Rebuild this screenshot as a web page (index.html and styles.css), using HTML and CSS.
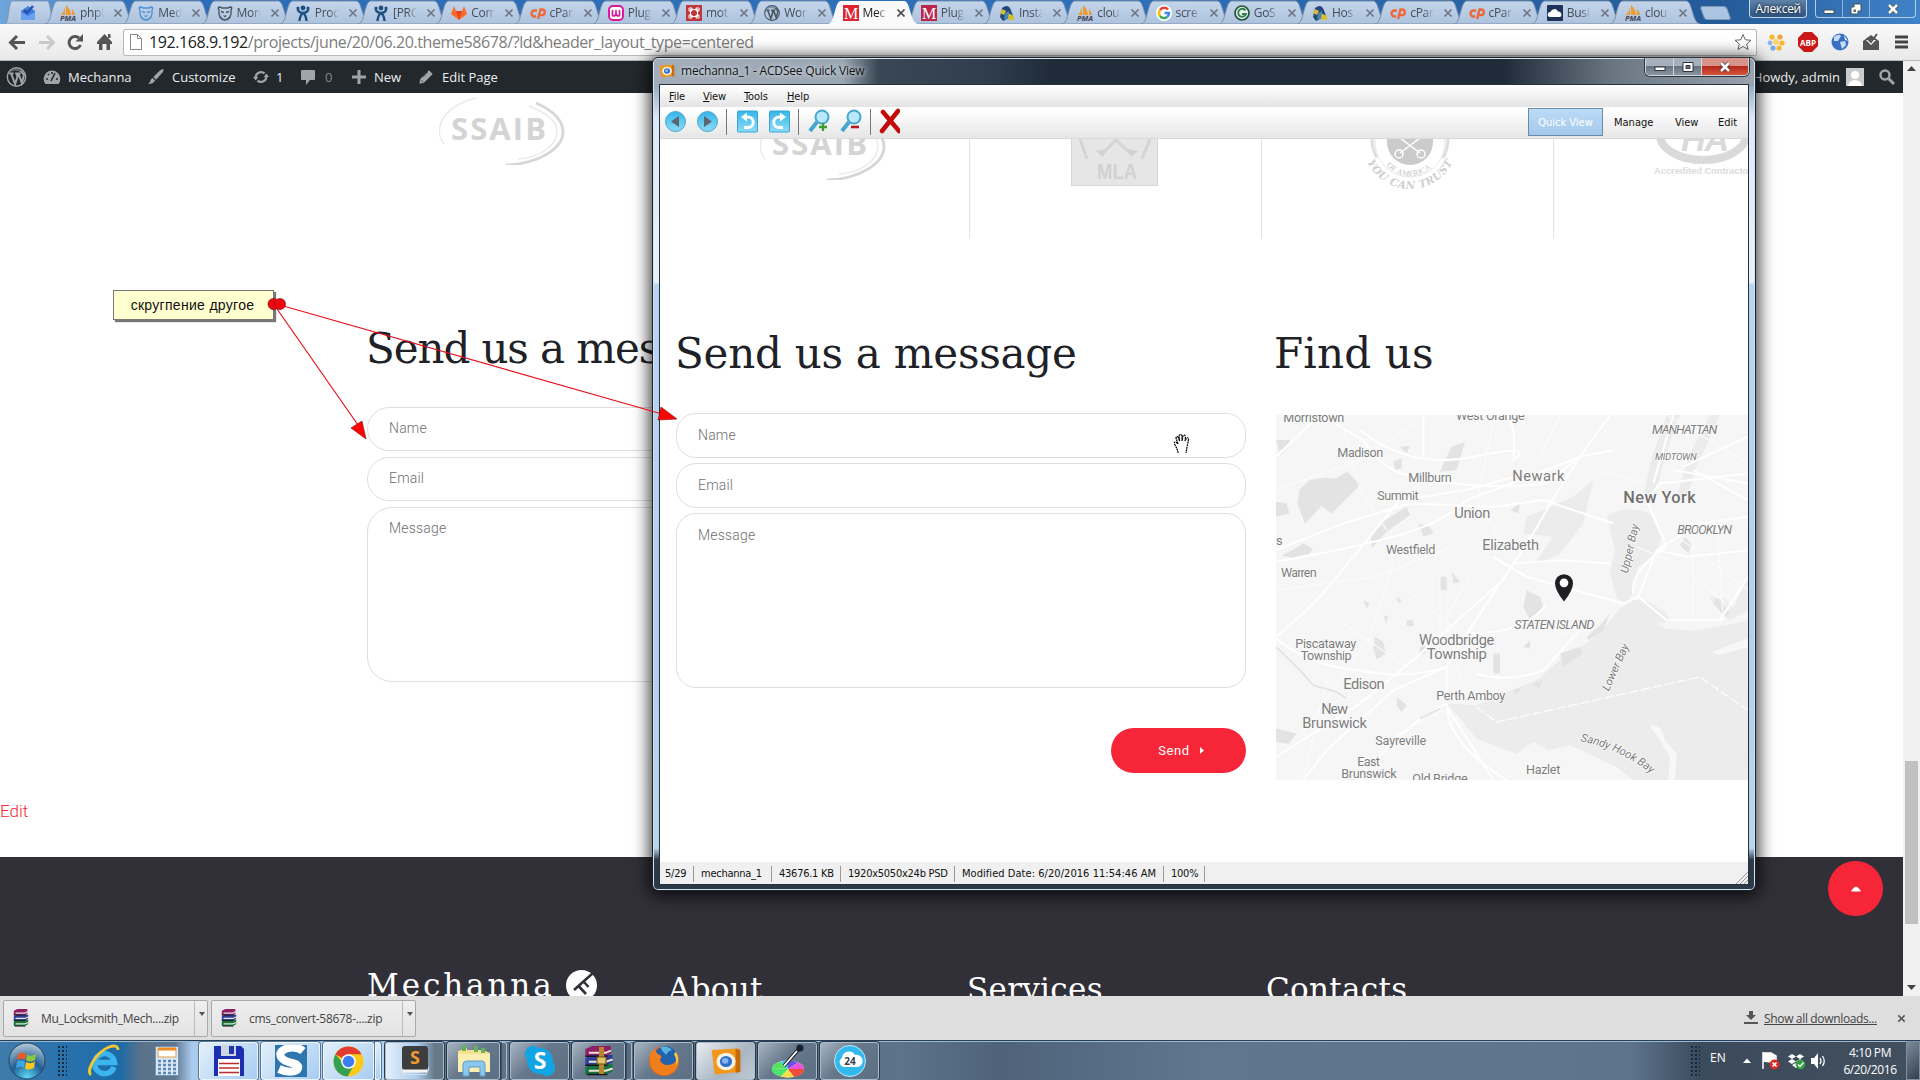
FILE: index.html
```html
<!DOCTYPE html>
<html lang="en">
<head>
<meta charset="utf-8">
<title>Mechanna</title>
<link rel="stylesheet" href="styles.css">
</head>
<body>
<svg class="defs" width="0" height="0">
  <defs>
    <linearGradient id="tabg" x1="0" y1="0" x2="0" y2="1"><stop offset="0" stop-color="#c3d5ea"/><stop offset="1" stop-color="#adc2de"/></linearGradient>
    <linearGradient id="blue" x1="0" y1="0" x2="0" y2="1"><stop offset="0" stop-color="#35b6ea"/><stop offset="1" stop-color="#8bdcf6"/></linearGradient>
    <radialGradient id="orb" cx=".5" cy=".95" r=".9"><stop offset="0" stop-color="#5fd8f5"/><stop offset=".5" stop-color="#1f5f92"/><stop offset="1" stop-color="#a9c2d4"/></radialGradient>
  </defs>
  <symbol id="x" viewBox="0 0 10 10"><path d="M1.5 1.5l7 7M8.5 1.5l-7 7" stroke="currentColor" stroke-width="1.7"/></symbol>
  <symbol id="shape" viewBox="0 0 92 24" preserveAspectRatio="none"><path d="M0 24C5 23 5 17 8 8Q10 1 13 1H78Q81 1 83 8C86 17 87 23 92 24Z" fill="url(#tabg)" stroke="#7b90ab"/></symbol>
  <symbol id="shapeon" viewBox="0 0 92 24" preserveAspectRatio="none"><path d="M0 24C5 23 5 17 8 8Q10 1 13 1H78Q81 1 83 8C86 17 87 23 92 24Z" fill="#f9f9fa"/></symbol>
  <symbol id="pma" viewBox="0 0 16 16"><path d="M1 10Q4 7 5 2V10ZM6 10V0Q11 5 11 10ZM12 10V4Q15 7 15 10Z" fill="#f09b30"/><text x="0" y="16" font-size="7" font-weight="bold" font-style="italic" textLength="16" lengthAdjust="spacingAndGlyphs" fill="#445">PMA</text></symbol>
  <symbol id="bear" viewBox="0 0 16 16"><path d="M2 5Q0 2 3 2L5 3H11L13 2Q16 2 14 5Q15 14 8 15Q1 14 2 5Z" fill="none" stroke="currentColor" stroke-width="1.4"/><path d="M4 6.500L7 7.500M12 6.500L9 7.500" stroke="currentColor" stroke-width="1.500"/><path d="M6 10.500H10L8 12.500Z" fill="currentColor"/></symbol>
  <symbol id="jira" viewBox="0 0 16 16"><circle cx="8" cy="3" r="2.400" fill="#205081"/><circle cx="3" cy="3" r="1.600" fill="#205081"/><circle cx="13" cy="3" r="1.600" fill="#205081"/><path d="M2.500 4Q4 8 8 8T13.500 4M8 8Q11 10 11.500 16M8 8Q5 10 4.500 16" fill="none" stroke="#205081" stroke-width="2.400"/></symbol>
  <symbol id="fox" viewBox="0 0 16 16"><path d="M0 9L3 1L5 6H11L13 1L16 9L8 15Z" fill="#fc6d26"/><path d="M5 6H11L8 15Z" fill="#e24329"/></symbol>
  <symbol id="cp" viewBox="0 0 16 16"><path d="M7 5.500H4.500a3 3 0 000 6H6M8 14L10.500 4.500H12a2.800 2.800 0 010 5.600H10" fill="none" stroke="#f0683a" stroke-width="2.400"/></symbol>
  <symbol id="woo" viewBox="0 0 16 16"><rect x="1" y="1" width="14" height="14" rx="4" fill="#fff" stroke="#d9189b" stroke-width="2"/><path d="M4.500 5V10.500Q6.300 12 8 9V5M8 9Q9.700 12 11.500 10.500V5" fill="none" stroke="#d9189b" stroke-width="1.700"/></symbol>
  <symbol id="mot" viewBox="0 0 16 16"><rect width="16" height="16" fill="#c0363d"/><path d="M4.500 4.500H11.500V11.500H4.500ZM3 3H6V6H3ZM10 3H13V6H10ZM3 10H6V13H3ZM10 10H13V13H10Z" fill="none" stroke="#fff"/></symbol>
  <symbol id="wp" viewBox="0 0 20 20"><circle cx="10" cy="10" r="9.200" fill="none" stroke="currentColor" stroke-width="1.400"/><path d="M2.700 6.500H7M4.600 6.500L8.600 17L11 9.500L9.800 6.500H14M12 6.500L15.300 16L17.500 8Q15 5 14.500 4" fill="none" stroke="currentColor" stroke-width="2"/><path d="M4 4Q10-1 16 4L15 6Q10 2 4 5Z" fill="currentColor" opacity=".5"/></symbol>
  <symbol id="m" viewBox="0 0 16 16"><rect width="16" height="16" fill="currentColor"/><text x="8" y="14" text-anchor="middle" font-family="Liberation Serif" font-size="16" fill="#fff">M</text></symbol>
  <symbol id="host" viewBox="0 0 16 16"><path d="M3 3Q8-1 11 3L13 8L15 14H8L4 16L1 12Z" fill="#25477d"/><path d="M3 4L7 6L5 10L1 8ZM9 8L15 11V15H9Z" fill="#d6bd35"/><path d="M6 8L10 6L9 14H5Z" fill="#4387ad"/></symbol>
  <symbol id="g" viewBox="0 0 16 16"><circle cx="8" cy="8" r="8" fill="#fff"/><path d="M12 4.500A5 5 0 004 5" fill="none" stroke="#ea4335" stroke-width="2.500"/><path d="M4 5A5 5 0 004 11" fill="none" stroke="#fbbc05" stroke-width="2.500"/><path d="M4 11A5 5 0 0011 12" fill="none" stroke="#34a853" stroke-width="2.500"/><path d="M11 12Q13 10.500 13 8H8.500" fill="none" stroke="#4285f4" stroke-width="2.500"/></symbol>
  <symbol id="gos" viewBox="0 0 16 16"><circle cx="8" cy="8" r="7" fill="#e9f0ef" stroke="#26533d" stroke-width="1.700"/><path d="M11.500 5.500A4 4 0 1012 9H8" fill="none" stroke="#29824b" stroke-width="1.800"/></symbol>
  <symbol id="cloud" viewBox="0 0 16 16"><rect width="16" height="16" rx="1" fill="#1f3358"/><path d="M3 12a2.500 2.500 0 01.5-5A4 4 0 0111 6.500 3 3 0 0113 12Z" fill="#fff"/></symbol>
  <symbol id="rar" viewBox="0 0 20 20" preserveAspectRatio="none"><path d="M2 2L6 0H17V5L14 7H2Z" fill="#8f1d68"/><path d="M2 8L6 6H18V11L14 13H2Z" fill="#2d3f9a"/><path d="M2 14L6 12H18V17L14 19H2Z" fill="#167340"/><path d="M4 4.500H14L17 3M4 10.500H14L18 9M4 16.500H14L18 15" fill="none" stroke="#e9e3ce" stroke-width="1.300"/><path d="M2 6.800H15M2 12.800H15M3 19H15" stroke="#1d1020"/></symbol>
  <symbol id="acd" viewBox="0 0 20 20" preserveAspectRatio="none"><path d="M1 2L18 1L19 17L3 19Z" fill="#f39719"/><path d="M16 1L19 2V17L16 18Z" fill="#c86c07"/><circle cx="10" cy="10" r="6" fill="#f4f1e7"/><circle cx="10" cy="10" r="3.800" fill="#2f71c9"/><circle cx="9.500" cy="9.500" r="2" fill="#87b4f0"/></symbol>
</svg>

<div class="screen">
  <header class="tabs">
    <div class="tab pin"><svg class="bg"><use href="#shape"/></svg><svg class="fav" viewBox="0 0 16 16"><path d="M1 6L8 1L15 6V15H1Z" fill="#3f7fe0"/><path d="M4 5L7 8L13 1" fill="none" stroke="#2552a8" stroke-width="2.500"/><path d="M1 7L8 11L15 7V15H1Z" fill="#6aa0f2"/></svg></div>
    <div class="tab"><svg class="bg"><use href="#shape"/></svg><svg class="fav"><use href="#pma"/></svg><span>phpl</span><svg class="x"><use href="#x"/></svg></div>
    <div class="tab"><svg class="bg"><use href="#shape"/></svg><svg class="fav sky"><use href="#bear"/></svg><span>Med</span><svg class="x"><use href="#x"/></svg></div>
    <div class="tab"><svg class="bg"><use href="#shape"/></svg><svg class="fav slate"><use href="#bear"/></svg><span>Mon</span><svg class="x"><use href="#x"/></svg></div>
    <div class="tab"><svg class="bg"><use href="#shape"/></svg><svg class="fav"><use href="#jira"/></svg><span>Prod</span><svg class="x"><use href="#x"/></svg></div>
    <div class="tab"><svg class="bg"><use href="#shape"/></svg><svg class="fav"><use href="#jira"/></svg><span>[PRC</span><svg class="x"><use href="#x"/></svg></div>
    <div class="tab"><svg class="bg"><use href="#shape"/></svg><svg class="fav"><use href="#fox"/></svg><span>Com</span><svg class="x"><use href="#x"/></svg></div>
    <div class="tab"><svg class="bg"><use href="#shape"/></svg><svg class="fav"><use href="#cp"/></svg><span>cPan</span><svg class="x"><use href="#x"/></svg></div>
    <div class="tab"><svg class="bg"><use href="#shape"/></svg><svg class="fav"><use href="#woo"/></svg><span>Plug</span><svg class="x"><use href="#x"/></svg></div>
    <div class="tab"><svg class="bg"><use href="#shape"/></svg><svg class="fav"><use href="#mot"/></svg><span>mot</span><svg class="x"><use href="#x"/></svg></div>
    <div class="tab"><svg class="bg"><use href="#shape"/></svg><svg class="fav slate"><use href="#wp"/></svg><span>Wor</span><svg class="x"><use href="#x"/></svg></div>
    <div class="tab on"><svg class="bg"><use href="#shapeon"/></svg><svg class="fav red"><use href="#m"/></svg><span>Mec</span><svg class="x"><use href="#x"/></svg></div>
    <div class="tab"><svg class="bg"><use href="#shape"/></svg><svg class="fav wine"><use href="#m"/></svg><span>Plug</span><svg class="x"><use href="#x"/></svg></div>
    <div class="tab"><svg class="bg"><use href="#shape"/></svg><svg class="fav"><use href="#host"/></svg><span>Insta</span><svg class="x"><use href="#x"/></svg></div>
    <div class="tab"><svg class="bg"><use href="#shape"/></svg><svg class="fav"><use href="#pma"/></svg><span>clou</span><svg class="x"><use href="#x"/></svg></div>
    <div class="tab"><svg class="bg"><use href="#shape"/></svg><svg class="fav"><use href="#g"/></svg><span>scre</span><svg class="x"><use href="#x"/></svg></div>
    <div class="tab"><svg class="bg"><use href="#shape"/></svg><svg class="fav"><use href="#gos"/></svg><span>GoS</span><svg class="x"><use href="#x"/></svg></div>
    <div class="tab"><svg class="bg"><use href="#shape"/></svg><svg class="fav"><use href="#host"/></svg><span>Hos</span><svg class="x"><use href="#x"/></svg></div>
    <div class="tab"><svg class="bg"><use href="#shape"/></svg><svg class="fav"><use href="#cp"/></svg><span>cPan</span><svg class="x"><use href="#x"/></svg></div>
    <div class="tab"><svg class="bg"><use href="#shape"/></svg><svg class="fav"><use href="#cp"/></svg><span>cPan</span><svg class="x"><use href="#x"/></svg></div>
    <div class="tab"><svg class="bg"><use href="#shape"/></svg><svg class="fav"><use href="#cloud"/></svg><span>Busi</span><svg class="x"><use href="#x"/></svg></div>
    <div class="tab"><svg class="bg"><use href="#shape"/></svg><svg class="fav"><use href="#pma"/></svg><span>clou</span><svg class="x"><use href="#x"/></svg></div>
    <div class="newtab"></div>
    <div class="user">Алексей</div>
    <div class="winctl"><i><svg width="12" height="12" viewBox="0 0 12 12"><rect x="1" y="7" width="10" height="3.500" fill="#fff" stroke="#455"/></svg></i><i><svg width="12" height="12" viewBox="0 0 12 12"><path d="M4 1H11V8H8V11H1V4H4Z" fill="#fff" stroke="#455"/><path d="M3.500 6.500H6V9H3.500Z" fill="#567"/></svg></i><i class="cl"><svg width="12" height="12" viewBox="0 0 12 12"><path d="M2 2L10 10M10 2L2 10" stroke="#455" stroke-width="4"/><path d="M2 2L10 10M10 2L2 10" stroke="#fff" stroke-width="2.500"/></svg></i></div>
  </header>

  <div class="toolbar">
    <svg width="119" height="36" viewBox="0 0 119 36" fill="none" stroke="#555" stroke-width="3"><path d="M25 18.500H11M17 12L10.500 18.500L17 25"/><path d="M39 18.500H53M47 12L53.500 18.500L47 25" stroke="#c9c9c9"/><path d="M80.500 21A6 6 0 1179 14"/><path d="M83 10V17.500H75.500Z" fill="#555" stroke="none"/><path d="M97 18L104.500 10L112 18V20H110V26H106.500V20H102.500V26H99V20H97ZM108 10H110.500V14H108Z" fill="#555" stroke="none"/></svg>
    <div class="omni">
      <svg width="12" height="16" viewBox="0 0 12 16"><path d="M.5.500H7.500L11.500 4.500V15.500H.5ZM7.500.500V4.500H11.500" fill="#fff" stroke="#888"/></svg>
      <span class="url"><b>192.168.9.192</b>/projects/june/20/06.20.theme58678/?ld&amp;header_layout_type=centered</span>
      <svg width="18" height="18" viewBox="0 0 18 18"><path d="M9 1.500L11.300 6.800L17 7.300L12.700 11L14 16.500L9 13.500L4 16.500L5.300 11L1 7.300L6.700 6.800Z" fill="#fff" stroke="#666"/></svg>
    </div>
    <div class="ext">
      <svg width="18" height="18" viewBox="0 0 18 18"><circle cx="5" cy="4" r="2.600" fill="#f7b62c"/><circle cx="13" cy="4" r="2.600" fill="#f5a03a"/><circle cx="3" cy="10" r="2.400" fill="#8bb6ee"/><circle cx="15" cy="10" r="2.600" fill="#f7b62c"/><circle cx="9" cy="9" r="3" fill="#fbd46e"/><circle cx="6" cy="15" r="2.600" fill="#77a7ea"/><circle cx="12" cy="15" r="2.600" fill="#f7b62c"/></svg>
      <svg width="20" height="20" viewBox="0 0 20 20"><path d="M6 0H14L20 6V14L14 20H6L0 14V6Z" fill="#cc1717"/><text x="2" y="13.500" font-size="9" font-weight="bold" fill="#fff" textLength="16" lengthAdjust="spacingAndGlyphs">ABP</text></svg>
      <svg width="18" height="18" viewBox="0 0 18 18"><circle cx="9" cy="9" r="8.500" fill="#3a70c4"/><path d="M3 4Q8 0 10 3L7 8L3 8ZM9 9L14 8L15 12L11 16Z" fill="#c6dcf6"/><path d="M13 2L17 8L14 7Z" fill="#dcebfb"/></svg>
      <svg width="18" height="18" viewBox="0 0 18 18"><path d="M1 8L9 2L17 8V17H1Z" fill="#555"/><path d="M4 7H14L9 12Z" fill="#fff"/><path d="M5 5L9 9L15 1" fill="none" stroke="#555" stroke-width="2"/></svg>
      <svg width="14" height="14" viewBox="0 0 14 14"><path d="M0 2H13M0 7H13M0 12H13" stroke="#444" stroke-width="3"/></svg>
    </div>
  </div>

  <div class="view">
    <div class="site">
      <nav class="admin">
        <svg class="i1"><use href="#wp"/></svg>
        <svg class="i2" viewBox="0 0 18 16"><path d="M2.500 15A8.300 8.300 0 1115.500 15Z" fill="#a0a5aa"/><path d="M8 12L12 4" stroke="#23282d" stroke-width="1.500"/><path d="M3 10H5M5 5L6 6M9 3V5M13 10H15" stroke="#23282d" stroke-width="1.500"/></svg>
        <a class="w1">Mechanna</a>
        <svg class="i3" viewBox="0 0 18 18"><path d="M17 0Q18 1 17 3L9 12L6 9L14 1ZM5 10L8 13Q6 17 0 17Q3 15 3 12Z" fill="#a0a5aa"/></svg>
        <a class="w2">Customize</a>
        <svg class="i4" viewBox="0 0 18 18"><path d="M3 9A6 6 0 0113 5M15 9A6 6 0 015 13" fill="none" stroke="#a0a5aa" stroke-width="2.500"/><path d="M0 9H6L3 13ZM12 9H18L15 5Z" fill="#a0a5aa"/></svg>
        <a class="w3">1</a>
        <svg class="i5" viewBox="0 0 16 16"><path d="M2 1H14Q15 1 15 2V10Q15 11 14 11H10L6 16V11H2Q1 11 1 10V2Q1 1 2 1Z" fill="#a0a5aa"/></svg>
        <a class="w4">0</a>
        <svg class="i6" viewBox="0 0 14 14"><path d="M7 0V14M0 7H14" stroke="#a0a5aa" stroke-width="3"/></svg>
        <a class="w5">New</a>
        <svg class="i7" viewBox="0 0 16 16"><path d="M11 1L15 5L6 14L1 15L2 10ZM3 11L5 13M10 3L5 8" fill="#a0a5aa" stroke="#23282d" stroke-width=".6"/></svg>
        <a class="w6">Edit Page</a>
        <a class="howdy">Howdy, admin</a>
        <svg class="av" viewBox="0 0 18 18"><rect width="18" height="18" fill="#ccc"/><circle cx="9" cy="7" r="4" fill="#fff"/><path d="M2 18Q3 12 9 12T16 18Z" fill="#fff"/></svg>
        <svg class="se" viewBox="0 0 16 16"><circle cx="6" cy="6" r="4.500" fill="none" stroke="#a0a5aa" stroke-width="2.500"/><path d="M9 9L15 15" stroke="#a0a5aa" stroke-width="3"/></svg>
      </nav>
      <main class="page">
        <svg class="ssaib" viewBox="0 0 128 72"><use href="#ss"/><symbol id="ss" viewBox="0 0 128 72"><text x="12" y="47" font-family="Open Sans" font-weight="bold" font-size="31" textLength="95" fill="#d4d4d4">SSAIB</text><path d="M97 10Q124 22 124 39C124 55 100 71 67 72" fill="none" stroke="#d6d6d6" stroke-width="2.800"/><path d="M37 5C2 14-6 37 5 51M90 13Q118 24 118 38C118 53 100 65 79 66" fill="none" stroke="#eaeaea" stroke-width="1.500"/></symbol></svg>
        <h2>Send us a message</h2>
        <form class="form">
          <div class="fld">Name</div>
          <div class="fld">Email</div>
          <div class="fld area">Message</div>
        </form>
        <a class="edit">Edit</a>
      </main>
      <footer class="foot">
        <span class="brand">Mechanna</span>
        <svg class="key" viewBox="0 0 31 31"><circle cx="15.500" cy="15.500" r="15.500" fill="#fff"/><path d="M27 3L8 20M12.500 16L20 24M17.500 11.500L22.500 17" stroke="#312f38" stroke-width="2.600"/></svg>
        <span class="c1">About</span><span class="c2">Services</span><span class="c3">Contacts</span>
      </footer>
    </div>
    <div class="scroll"><svg width="17" height="16" viewBox="0 0 17 16"><path d="M4 10H13L8.500 5Z" fill="#444"/></svg><div class="thumb"></div><svg width="17" height="16" viewBox="0 0 17 16"><path d="M4 5H13L8.500 10Z" fill="#444"/></svg></div>
  </div>

  <div class="shelf">
    <div class="dl"><svg width="18" height="18"><use href="#rar"/></svg><span>Mu_Locksmith_Mech....zip</span><i></i></div>
    <div class="dl"><svg width="18" height="18"><use href="#rar"/></svg><span>cms_convert-58678-....zip</span><i></i></div>
    <svg class="dicon" viewBox="0 0 14 14"><path d="M5 0H9V4H12L7 9L2 4H5ZM0 11H14V13H0Z" fill="#555"/></svg>
    <a class="all">Show all downloads...</a>
    <svg class="dx"><use href="#x"/></svg>
  </div>

  <div class="task">
    <div class="cell orb"><svg width="38" height="38" viewBox="0 0 38 38"><circle cx="19" cy="19" r="18" fill="url(#orb)" stroke="#26435c"/><path d="M10 12Q14 9 18 12L17 18Q13 15 9 18Z" fill="#ef5b27"/><path d="M19 12.500Q23 15 28 12L27 18Q22 21 18 18.500Z" fill="#8cc63e"/><path d="M9 19.500Q13 17 17 19.500L16 26Q12 23 8 26Z" fill="#3ea5e5"/><path d="M18 20Q22 22.500 27 19.500L26 26Q21 28.500 17 26.500Z" fill="#fbc51b"/></svg></div>
    <div class="grip"></div>
    <div class="cell ie"><svg width="34" height="34" viewBox="0 0 34 34"><path d="M27 23A10 10 0 1127.500 18.500H9" fill="none" stroke="#3cb4ee" stroke-width="5.500"/><path d="M4 31C-1 27 8 9 22 3Q31 0 31 6" fill="none" stroke="#f6c62f" stroke-width="2.800"/></svg></div>
    <div class="cell calc"><svg width="24" height="30" viewBox="0 0 24 30"><rect x=".5" y=".5" width="23" height="29" rx="1" fill="#d8e8f6" stroke="#6f93b4"/><rect x="3" y="3" width="18" height="8" fill="#fff" stroke="#e39a48"/><path d="M3 3H21" stroke="#ef8a22" stroke-width="3"/><path d="M3 15H21M3 19H21M3 23H21M3 27H21" stroke="#5d87b3" stroke-width="2.500" stroke-dasharray="3 2"/></svg></div>
    <div class="btn lt"><svg width="32" height="32" viewBox="0 0 32 32"><path d="M1 1H28L31 4V31H1Z" fill="#1c2fb0"/><rect x="8" y="0" width="15" height="11" fill="#ccd5e6"/><rect x="16" y="1" width="5" height="8" fill="#2338a8"/><rect x="5" y="14" width="22" height="17" fill="#fff"/><path d="M6 18.500H26M6 23H26M6 27.500H26" stroke="#b92c2c" stroke-width="1.300"/></svg></div>
    <div class="btn lt"><svg width="32" height="32" viewBox="0 0 32 32"><rect width="32" height="32" fill="#2e76ae"/><path d="M28 6Q22 1 13 3Q3 6 6 12Q8 16 17 18Q26 20 22 25Q15 29 4 24" fill="none" stroke="#fff" stroke-width="8"/></svg></div>
    <div class="btn lt chrome"><svg width="31" height="31" viewBox="0 0 32 32"><circle cx="16" cy="16" r="15.500" fill="#fcca16"/><path d="M16 16L2.500 8.500A15.500 15.500 0 0129.500 8.500H16Z" fill="#e23b2f"/><path d="M2.500 8.500A15.500 15.500 0 0015 31.500L21 21L16 16H9Z" fill="#35a052"/><circle cx="16" cy="16" r="7.500" fill="#fff"/><circle cx="16" cy="16" r="6" fill="#3c7df0"/></svg></div>
    <div class="stk lt"></div>
    <div class="btn fade"><svg width="30" height="30" viewBox="0 0 30 30"><path d="M1 20L5 28H26L29 20V24L26 29H4L1 25Z" fill="#ddd"/><rect x="2" y="0" width="26" height="24" rx="3" fill="#3d3d3d"/><text x="15" y="18" text-anchor="middle" font-size="18" font-weight="bold" fill="#f39a31">S</text><path d="M3 25H27" stroke="#f4f4f4" stroke-width="3"/></svg></div>
    <div class="btn exp"><svg width="34" height="32" viewBox="0 0 34 32"><path d="M1 6L10 3V5H26L33 8V27H1Z" fill="#f5e08c"/><path d="M5 0H9V6H5ZM17 1H21V7H17ZM24 3H28V8H24Z" fill="#67b05c"/><path d="M1 9H33V27H1Z" fill="#fbeeb2"/><path d="M6 31V20Q6 16 10 16H25Q28 16 28 20V31H23V22H12V31Z" fill="#8cc8ee" stroke="#5b9cc9"/></svg></div>
    <div class="stk"></div>
    <div class="btn"><svg width="32" height="32" viewBox="0 0 32 32"><circle cx="16" cy="16" r="13" fill="#12a5e6"/><circle cx="9" cy="9" r="8" fill="#12a5e6"/><circle cx="23" cy="23" r="8" fill="#12a5e6"/><text x="16" y="24" text-anchor="middle" font-size="23" font-weight="bold" fill="#fff">S</text></svg></div>
    <div class="btn rarb"><svg width="34" height="30"><use href="#rar"/><path d="M17 1H22V28H17Z" fill="#b8862f"/><rect x="15" y="11" width="9" height="7" fill="#e0c46a" stroke="#6e4f16"/></svg></div>
    <div class="stk"></div>
    <div class="btn ff"><svg width="32" height="32" viewBox="0 0 32 32"><circle cx="16" cy="16" r="15" fill="#e9671b"/><circle cx="17.500" cy="12.500" r="11.500" fill="#2262ac"/><path d="M2 9Q4 5 7 4Q8 9 12 10Q15 12 12 14Q13 20 20 20Q28 19 30 12Q31 26 20 30Q5 31 2 18Z" fill="#ee7f1b"/><path d="M28 7Q32 14 28 21Q29 14 26 9Z" fill="#f8cf3e"/><path d="M12 2Q20 0 24 5Q20 6 18 10Q14 6 12 2Z" fill="#59b4e0"/></svg></div>
    <div class="btn act"><svg width="32" height="29"><use href="#acd"/></svg></div>
    <div class="btn"><svg width="34" height="34" viewBox="0 0 34 34"><ellipse cx="17" cy="25" rx="16" ry="8.500" fill="#fff"/><path d="M17 25L1 24A16 8 0 019 18Z" fill="#54e05a"/><path d="M17 25L9 18A16 8 0 0117 16.500Z" fill="#2cd0e6"/><path d="M17 25L17 16.500A16 8 0 0127 18.500Z" fill="#6a50e8"/><path d="M17 25L27 18.500A16 8 0 0133 25Z" fill="#ea50d8"/><path d="M17 25L33 25A16 8 0 0123 33Z" fill="#f04a3a"/><path d="M17 25L23 33A16 8 0 0110 32.500Z" fill="#f8e04a"/><path d="M17 25L10 32.500A16 8 0 011 24Z" fill="#4ae468"/><path d="M13 22L27 6" stroke="#222" stroke-width="3.500"/><path d="M13 22L26 7" stroke="#fff" stroke-width="1.800"/><circle cx="29" cy="4" r="3.500" fill="#1b1f2c"/></svg></div>
    <div class="btn"><svg width="32" height="32" viewBox="0 0 32 32"><circle cx="16" cy="16" r="15.500" fill="#31b9ee" stroke="#bfe9fb"/><path d="M9 22A5 5 0 018 13 7 7 0 0121 10 6 6 0 0124 22Z" fill="#fff"/><text x="16" y="20" text-anchor="middle" font-size="10" font-weight="bold" fill="#30414f">24</text></svg></div>
    <div class="grip g2"></div>
    <span class="en">EN</span>
    <svg class="tray" viewBox="0 0 90 24"><path d="M0 14H8L4 9.500Z" fill="#fff"/><path d="M20 3V20M21 4H28L33 7V13H28L21 12Z" fill="#fff" stroke="#fff" stroke-width="1.500"/><circle cx="31.500" cy="15.500" r="5" fill="#da2b22"/><path d="M29.500 13.500L33.500 17.500M33.500 13.500L29.500 17.500" stroke="#fff" stroke-width="1.600"/><path d="M49 5L53 7.500L49 10L45 7.500ZM57 5L61 7.500L57 10L53 7.500ZM49 10L53 12.500L49 15L45 12.500ZM57 10L61 12.500L57 15L53 12.500ZM49 16L53 14L57 16L53 19Z" fill="#fff"/><circle cx="57.500" cy="15.500" r="4.800" fill="#2ea23c"/><path d="M55 15.500L57 17.500L60.500 13.500" stroke="#fff" stroke-width="1.400" fill="none"/><path d="M68 9H71L75 4V20L71 15H68Z" fill="#fff"/><path d="M77 9Q79 12 77 15M79.500 7Q83 12 79.500 17" fill="none" stroke="#fff" stroke-width="1.300"/></svg>
    <div class="clock">4:10 PM<br>6/20/2016</div>
    <div class="peek"></div>
  </div>
</div>

<a class="totop"><svg width="10" height="6" viewBox="0 0 10 6"><path d="M0 5.500Q5-4 10 5.500Z" fill="#fff"/></svg></a>

<section class="win">
  <div class="title"><svg width="16" height="14"><use href="#acd"/></svg><span>mechanna_1 - ACDSee Quick View</span>
    <div class="ctl"><i><svg width="12" height="12" viewBox="0 0 12 12"><rect x="1" y="6" width="10" height="3.500" fill="#fff" stroke="#334"/></svg></i><i><svg width="12" height="12" viewBox="0 0 12 12"><path d="M1 1.500H11V10.500H1ZM4 4.500V7.500H8V4.500Z" fill="#fff" fill-rule="evenodd" stroke="#334"/></svg></i><i class="cl"><svg width="12" height="12" viewBox="0 0 12 12"><path d="M2 2L10 10M10 2L2 10" stroke="#533" stroke-width="4"/><path d="M2 2L10 10M10 2L2 10" stroke="#fff" stroke-width="2.500"/></svg></i></div>
  </div>
  <div class="client">
    <div class="menu"><span><u>F</u>ile</span><span><u>V</u>iew</span><span><u>T</u>ools</span><span><u>H</u>elp</span></div>
    <div class="tb">
      <svg width="240" height="31" viewBox="0 0 240 31">
        <g stroke="#4aa3cd"><circle cx="15.500" cy="14.500" r="10" fill="url(#blue)"/><circle cx="47.500" cy="14.500" r="10" fill="url(#blue)"/></g>
        <path d="M11 14.500L19 9V20ZM52 14.500L44 9V20Z" fill="#5a6570"/>
        <path d="M66.500 2V28M138.500 2V28M210.500 2V28" stroke="#777"/>
        <rect x="77.500" y="4" width="20" height="21" rx="1" fill="url(#blue)" stroke="#3ba3d4"/><rect x="109.500" y="4" width="20" height="21" rx="1" fill="url(#blue)" stroke="#3ba3d4"/>
        <path d="M85 10H88A5 5 0 0188 20.500H84M122 10H119A5 5 0 00119 20.500H123" fill="none" stroke="#fff" stroke-width="3"/><path d="M81 10L87 5.500V14.500ZM126 10L120 5.500V14.500Z" fill="#fff"/>
        <g fill="#b8e9fa" stroke="#47a6d2" stroke-width="2"><path d="M157 15L150 24" stroke-width="4"/><circle cx="162" cy="10" r="6.500"/><path d="M189 15L182 24" stroke-width="4"/><circle cx="194" cy="10" r="6.500"/></g>
        <path d="M159 20H167M163 16V24" stroke="#3b9b2d" stroke-width="2.300"/><path d="M191 20H199" stroke="#b5161b" stroke-width="2.600"/>
        <path d="M223 5L239 24M238 4L222 24" stroke="#c40909" stroke-width="4.500" stroke-linecap="round"/>
      </svg>
      <div class="modes"><b>Quick View</b><span>Manage</span><span>View</span><span>Edit</span></div>
    </div>
    <div class="canvas">
      <svg class="logos" width="1088" height="100" viewBox="660 138 1088 100">
        <svg x="760" y="107" width="128" height="72" viewBox="0 0 128 72"><use href="#ss"/></svg>
        <path d="M969.500 138V237M1261.500 138V237M1553.500 138V237" stroke="#e2e2e2"/>
        <rect x="1071.500" y="120" width="86" height="64.500" fill="#e6e6e6" stroke="#d6d6d6"/><path d="M1080 138L1087 158M1101 154L1116 139L1132 154M1150 138L1142 158" fill="none" stroke="#d5d5d5" stroke-width="3"/><path d="M1096 150L1106 148L1103 156ZM1138 150L1128 148L1131 156Z" fill="#d2d2d2"/>
        <text x="1097" y="178" font-family="Liberation Sans" font-weight="bold" font-size="22" textLength="40" lengthAdjust="spacingAndGlyphs" fill="#d2d2d2">MLA</text>
        <circle cx="1410" cy="138" r="38" fill="none" stroke="#dedede" stroke-width="3" stroke-dasharray="20 80 140"/><circle cx="1410" cy="141" r="35" fill="none" stroke="#e8e8e8"/><circle cx="1410" cy="141" r="23" fill="#cbcbcb"/><path d="M1396 134L1420 152M1424 134L1400 152" stroke="#fff" stroke-width="1.500"/><circle cx="1399" cy="153" r="4" fill="none" stroke="#fff" stroke-width="1.500"/><circle cx="1421" cy="153" r="4" fill="none" stroke="#fff" stroke-width="1.500"/>
        <path id="arc" d="M1367 160A47 47 0 001453 160" fill="none"/><text font-family="DejaVu Serif" font-weight="bold" font-style="italic" font-size="10.500" fill="#cfcfcf"><textPath href="#arc" startOffset="1" textLength="106">YOU CAN TRUST</textPath></text>
        <path id="arc2" d="M1380 152A31 31 0 001440 152" fill="none"/><text font-family="Liberation Serif" font-size="8" fill="#c4c4c4"><textPath href="#arc2" startOffset="14" textLength="50">OF AMERICA</textPath></text>
        <ellipse cx="1703" cy="134" rx="43" ry="25" fill="#fff" stroke="#dadada" stroke-width="8"/><text x="1681" y="150" font-family="Liberation Sans" font-style="italic" font-weight="bold" font-size="34" fill="#dadada" textLength="48">HA</text>
        <text x="1654" y="173" font-family="Liberation Sans" font-weight="bold" font-size="9.500" textLength="103" fill="#dcdcdc">Accredited Contractors</text>
      </svg>
      <div class="cols">
        <div class="left">
          <h2>Send us a message</h2>
          <div class="form2"><div class="fld">Name</div><div class="fld">Email</div><div class="fld area">Message</div></div>
          <a class="send">Send<svg width="4" height="7" viewBox="0 0 4 7"><path d="M0 0L4 3.500L0 7Z" fill="#fff"/></svg></a>
        </div>
        <div class="right">
          <h2>Find us</h2>
          <svg class="map" width="472" height="365" viewBox="48 75 1416 1094" preserveAspectRatio="none">
            <rect x="48" y="75" width="1416" height="1094" fill="#f6f6f6"/>
            <g fill="#ececec">
              <path d="M1464 690L1400 705L1300 722L1215 715L1190 700L1235 695L1215 665L1165 635L1125 628L1080 655L1040 705L985 755L905 805L830 870L740 905L650 945L560 940L600 985L650 1045L770 1090L820 1055L865 1080L930 1065L985 1090L1070 1130L1120 1169H1464Z"/>
              <path d="M1040 380Q1090 340 1170 370L1205 440L1190 490L1130 535L1120 605L1100 640L1070 625L1050 550L1065 480Z"/>
              <path d="M1150 330L1170 220L1220 75H1260L1215 200L1180 340ZM1250 320L1285 200L1350 75H1380L1310 230L1280 320Z"/>
              <path d="M870 350L940 320L1000 270L970 400L900 490L840 520L830 510L880 440L790 430L800 380Z"/>
              <path d="M1345 620L1395 625L1420 655L1464 560V660L1405 690Z"/>
            </g>
            <g fill="#e3e3e3">
              <path d="M118 300L150 270L195 262L225 265L262 245L300 285L215 370L185 348L135 400L112 340Z"/><path d="M48 335L80 340L88 370L48 380ZM65 495L105 475L130 460L158 475L150 490L95 503ZM333 440L360 400L440 350L450 375L380 425L335 475ZM575 170L615 155L590 240L540 245L560 200ZM48 150L90 150L90 165L60 195ZM48 1015L110 1030L85 1060L48 1055Z"/>
              <path d="M345 740L370 755L378 790L350 808L340 775ZM410 920L440 945L425 965L410 945ZM475 400L510 410L520 430L490 440ZM800 600L840 620L850 650L810 690L790 650ZM900 790L960 770L970 790L910 830ZM790 770L810 750V775ZM700 790L720 790L720 850L700 850ZM1260 465L1275 440L1295 465L1285 490ZM400 215L425 205V235L405 240ZM420 170L450 168L440 190ZM750 360L780 340L775 370ZM820 880L850 870L835 895ZM760 900L785 890L770 915ZM1370 625L1410 670L1395 680L1360 640Z"/>
              <path d="M310 630L330 640L320 655ZM370 675L385 680L378 700ZM480 770L495 765V790L478 795ZM540 560H560V600H540ZM575 545L600 575L580 580ZM410 620L425 630L415 642ZM440 690H460V708H440ZM980 740L1020 705L1050 670L1030 720L985 750Z"/>
            </g>
            <path d="M1170 1005Q1205 1000 1215 1050L1250 1090L1245 1169H1225L1230 1100L1200 1050ZM1355 785L1464 745V770L1375 795Z" fill="#f8f8f8"/>
            <g fill="none" stroke="#fff" stroke-width="6">
              <path d="M48 200L100 150L180 75M180 75Q240 110 310 150Q340 210 420 250L560 275Q700 300 860 280L960 200L1060 180M300 120Q450 240 640 200T760 210Q770 110 740 75"/>
              <path d="M48 515Q250 480 400 440T620 330L860 240L960 200L1050 75M48 740Q170 640 230 560L420 330L620 300L800 250M48 480L250 400L450 340L700 350L850 330L1060 400"/>
              <path d="M48 745Q150 830 300 840Q440 870 560 830L620 730L760 520Q830 420 870 340L960 200M560 830V940Q560 1060 740 1169M560 940Q430 1000 300 1169M560 950L700 1169M620 730Q800 730 860 640"/>
              <path d="M48 1100L300 940L470 800L650 640L740 560M130 1169L200 1080L400 900L560 830M700 500L800 560L1090 640L1135 620L1190 480L1320 400L1464 380M1120 610Q1110 540 1220 470L1160 330L1200 280L1464 250"/>
              <path d="M650 850Q740 880 850 840L960 720M1190 480L1280 500L1464 480M1135 620L1220 690L1380 690L1464 560M1180 280L1240 75M1240 240L1464 280M1300 240L1464 330M760 520L900 510L1050 520M490 75V200M1270 230L1464 140"/>
            </g>
            <g fill="none" stroke="#fcfcfc" stroke-width="3">
              <path d="M48 300L300 210L500 75M48 600L350 560L600 460M120 1040L330 740L400 520M600 860L560 680L650 520M900 75L840 200M1010 240L1150 280M1220 75L1464 220M240 75L300 300L380 420M700 100L650 330L740 480M440 600L640 760M250 700L440 830M540 550V730M820 700L960 740M200 870L130 1169M400 1040L550 960M1130 470L1250 520L1400 640M1300 400V680M1370 380L1390 690M1240 430L1464 600"/>
              <path d="M650 950L710 995L1320 860L1464 960" stroke-width="4" stroke-dasharray="28 9"/>
            </g>
            <path d="M48 770L110 830L160 885L230 905L260 925M480 985L540 955" fill="none" stroke="#e2e2e2" stroke-width="5"/>
            <g font-family="Roboto" font-size="38" fill="#7d7d7d" stroke="#fafafa" stroke-width="5" paint-order="stroke">
              <text x="70" y="95" textLength="183">Morristown</text><text x="588" y="90" textLength="206">West Orange</text><text x="232" y="200" textLength="138">Madison</text><text x="445" y="275" textLength="130">Millburn</text><text x="352" y="329" textLength="124">Summit</text>
              <text x="757" y="272" font-size="44" textLength="156">Newark</text><text x="583" y="383" font-size="44" textLength="108">Union</text><text x="667" y="479" font-size="44" textLength="170">Elizabeth</text><text x="378" y="491" textLength="148">Westfield</text><text x="48" y="466">s</text><text x="63" y="562" textLength="107">Warren</text>
              <text x="1090" y="339" font-size="49" font-weight="500" fill="#707070" textLength="217">New York</text>
              <text x="106" y="772" textLength="183">Piscataway</text><text x="122" y="809" textLength="153">Township</text><text x="477" y="763" font-size="44" textLength="226">Woodbridge</text><text x="500" y="806" font-size="44" textLength="180">Township</text><text x="250" y="895" font-size="44" textLength="124">Edison</text><text x="529" y="928" textLength="207">Perth Amboy</text><text x="184" y="970" font-size="44" textLength="80">New</text><text x="127" y="1012" font-size="44" textLength="194">Brunswick</text><text x="346" y="1063" textLength="153">Sayreville</text><text x="292" y="1126" textLength="68">East</text><text x="244" y="1163" textLength="166">Brunswick</text><text x="457" y="1178" textLength="166">Old Bridge</text><text x="798" y="1150" textLength="103">Hazlet</text>
              <g font-style="italic"><text x="1176" y="132" textLength="196">MANHATTAN</text><text x="1185" y="210" font-size="29" textLength="125">MIDTOWN</text><text x="1252" y="432" textLength="164">BROOKLYN</text><text x="763" y="717" textLength="240">STATEN ISLAND</text>
              <text font-size="34" textLength="150" transform="translate(1103 551) rotate(-77)">Upper Bay</text><text font-size="34" textLength="150" transform="translate(1046 904) rotate(-66)">Lower Bay</text><path id="hook" d="M961 1053Q1080 1075 1180 1155" stroke="none" fill="none"/><text font-size="34"><textPath href="#hook" textLength="236">Sandy Hook Bay</textPath></text></g>
            </g>
            <path d="M912 634Q885 600 885 579A27 27 0 01939 579Q939 600 912 634Z" fill="#1f1f23"/><circle cx="912" cy="578" r="13" fill="#fff"/>
          </svg>
        </div>
      </div>
    </div>
    <div class="status"><span class="s1">5/29</span><span class="s2">mechanna_1</span><span class="s3">43676.1 KB</span><span class="s4">1920x5050x24b PSD</span><span class="s5">Modified Date: 6/20/2016 11:54:46 AM</span><span class="s6">100%</span><svg width="12" height="12" viewBox="0 0 12 12"><path d="M0 12L12 0M4 12L12 4M8 12L12 8" stroke="#999"/></svg></div>
  </div>
</section>

<svg class="cursor" width="18" height="22" viewBox="0 0 18 22"><path d="M5 20Q5 17 1.500 11Q1 8 3.500 9.500L5 11L3 5Q3.500 2.500 5.500 4.500L6.500 8L6 3Q7.500 0 9 3V8L10 3Q12 1 12.500 4L12 8L13.500 5Q16 4 15.500 7L14 14L13 20" fill="#fff" stroke="#000" stroke-width="1.200" stroke-dasharray="2 .6"/></svg>
<div class="note">скругпение другое</div>
<svg class="arrows" width="600" height="180" viewBox="100 280 600 180"><path d="M275 306L358 425M280 305L662 414" stroke="#e8101c" stroke-width="1.200"/><circle cx="273.500" cy="304" r="5.500" fill="#ee0710" stroke="#8a0a0a" stroke-width=".7"/><circle cx="280" cy="304" r="5.500" fill="#ee0710" stroke="#8a0a0a" stroke-width=".7"/><path d="M366 439L351 428L362 421ZM677 419L658 420L661 407Z" fill="#fe0505" stroke="#7a0808" stroke-width=".6"/></svg>
</body>
</html>
```
FILE: styles.css
```css
* { box-sizing: border-box; }
body { margin: 0; width: 1920px; height: 1080px; overflow: hidden; position: relative; background: #fff; font-family: "Open Sans", sans-serif; }
i { font-style: normal; }
.defs { position: absolute; }
.screen { height: 1080px; display: flex; flex-direction: column; }

/* browser tab strip */
.tabs { height: 24px; display: flex; background: linear-gradient(90deg, #6fa6dc 0, #2d6cb8 140px, #2e70ba 1100px, #245a98 1720px, #3f83c8 1920px); flex: none; }
.tab { position: relative; width: 90px; margin-right: -11.75px; height: 24px; display: flex; align-items: center; flex: none; padding-left: 15px; }
.tab .bg { position: absolute; left: 0; top: 0; width: 100%; height: 24px; }
.tab .fav { position: relative; width: 16px; height: 16px; margin-top: 2px; flex: none; }
.tab span { position: relative; width: 24px; margin-left: 4px; overflow: hidden; white-space: nowrap; font-size: 12px; letter-spacing: -.3px; color: #454c58; line-height: 20px; margin-top: 2px; -webkit-mask-image: linear-gradient(90deg, #000 60%, transparent); }
.tab .x { position: relative; width: 10px; height: 10px; margin: 2px 0 0 9px; color: #6f7885; }
.tab.pin { width: 50px; margin-left: 5px; margin-right: -10px; }
.tab.on { z-index: 2; }
.tab.on span { color: #222; }
.tab.on .x { color: #444; }
.sky { color: #4d92d2; } .slate { color: #4a5663; } .red { color: #dc2434; } .wine { color: #b9264c; }
.newtab { width: 27px; height: 14px; margin: 6px 0 0 14px; background: #abc4e2; border: 1px solid #7d98b9; transform: skewX(20deg); border-radius: 3px; flex: none; }
.user { width: 58px; height: 18px; margin-left: 20px; border: 1px solid #c3d7ea; border-top: 0; border-radius: 0 0 4px 4px; background: linear-gradient(#5f82a8, #2d5480); color: #fff; font-size: 12px; line-height: 17px; text-align: center; letter-spacing: -.3px; text-shadow: 0 0 3px #000; flex: none; }
.winctl { display: flex; margin-left: 8px; height: 18px; border: 1px solid #b4cfea; border-top: 0; border-radius: 0 0 4px 4px; }
.winctl i { width: 27px; display: flex; align-items: center; justify-content: center; border-right: 1px solid #8fb3d8; }
.winctl .cl { width: 45px; border: 0; }

.toolbar { height: 37px; flex: none; display: flex; align-items: center; background: linear-gradient(#f9f9fa, #e9e9ea); border-bottom: 1px solid #b6b6b6; }
.omni { width: 1634px; height: 27px; margin-left: 4px; border: 1px solid #b9b9b9; border-radius: 2px; background: #fff; display: flex; align-items: center; padding: 0 4px 0 6px; }
.url { font-size: 16px; margin-left: 7px; flex: 1; color: #7d7d7d; letter-spacing: -.41px; line-height: 24px; }
.url b { font-weight: 400; color: #222; }
.ext { display: flex; align-items: center; gap: 13px; margin-left: 10px; }
.ext svg:last-child { margin-left: 2px; }

/* page behind the viewer */
.view { height: 935px; display: flex; flex: none; }
.site { width: 1903px; height: 935px; overflow: hidden; display: flex; flex-direction: column; }
.admin { height: 32px; flex: none; background: #23282d; color: #eee; font-size: 13px; display: flex; align-items: center; padding-left: 6px; }
.admin svg { flex: none; height: 16px; }
.admin a { flex: none; white-space: nowrap; letter-spacing: 0; }
.i1 { width: 21px; height: 20px !important; color: #a0a5aa; }
.i2 { width: 18px; margin-left: 16px; } .w1 { width: 78px; margin-left: 7px; }
.i3 { width: 18px; margin-left: 1px; } .w2 { width: 72px; margin-left: 7px; }
.i4 { width: 18px; margin-left: 8px; } .w3 { width: 22px; margin-left: 6px; }
.i5 { width: 16px; margin-left: 2px; } .w4 { width: 25px; margin-left: 9px; color: #84898e; }
.i6 { width: 14px; margin-left: 2px; } .w5 { width: 36px; margin-left: 8px; }
.i7 { width: 16px; margin-left: 8px; } .w6 { width: 70px; margin-left: 8px; }
.howdy { margin-left: auto; }
.av { width: 18px; height: 18px !important; margin-left: 6px; }
.se { width: 16px; margin: 0 8px 0 15px; }
.page { height: 764px; flex: none; display: flex; flex-direction: column; align-items: flex-start; }
.ssaib { width: 128px; height: 72px; margin-left: 439px; }
h2 { margin: 0; font: 400 42px/60px "DejaVu Serif", serif; color: #202126; white-space: nowrap; letter-spacing: -.25px; }
.page h2 { margin: 154px 0 0 366px; letter-spacing: -1.1px; }
.form { margin: 28px 0 0 367px; width: 570px; display: grid; grid-template-rows: 44px 44px 175px; gap: 6px; }
.fld { border: 1px solid #dedede; border-radius: 25px; padding: 11px 21px; font: 300 14px/20px Roboto, sans-serif; color: #6f6f6f; letter-spacing: .2px; }
.form .fld { padding-top: 10px; }
.edit { margin-top: 117px; font: 300 17px/24px Roboto, sans-serif; color: #f62537; }
.foot { flex: 1; background: #312f38; display: flex; align-items: flex-start; color: #fff; font: 400 31px/36px "DejaVu Serif", serif; letter-spacing: .3px; padding: 113px 0 0 367px; white-space: nowrap; }
.brand { font-size: 31px; width: 199px; letter-spacing: 2.900px; margin-top: -3px; }
.key { width: 31px; height: 31px; flex: none; }
.c1 { margin-left: 71px; width: 299px; } .c2 { width: 299px; } .c1, .c2, .c3 { margin-top: 1px; }
.scroll { width: 17px; background: #f1f1f1; display: flex; flex-direction: column; }
.thumb { width: 13px; height: 163px; margin: 684px 2px auto; background: #c1c1c1; }

.totop { position: absolute; left: 1828px; top: 861px; width: 55px; height: 55px; border-radius: 50%; background: #f62537; display: flex; align-items: center; justify-content: center; }

.shelf { height: 44px; flex: none; background: #dedede; display: flex; align-items: center; padding-left: 3px; }
.dl { width: 205px; height: 37px; margin-right: 3px; border: 1px solid #a9a9a9; border-radius: 2px; background: linear-gradient(#efefef, #e3e3e3); display: flex; align-items: center; padding-left: 8px; font-size: 12px; color: #444; letter-spacing: -.3px; }
.dl span { width: 153px; margin-left: 11px; flex: none; white-space: nowrap; }
.dl i { height: 35px; border-left: 1px solid #bcbcbc; position: relative; }
.dl i::after { content: ""; position: absolute; left: 4px; top: 11px; border: 3px solid transparent; border-top: 4px solid #555; }
.dicon { width: 16px; height: 14px; margin-left: auto; }
.all { font-size: 12px; color: #444; text-decoration: underline; width: 113px; margin-left: 5px; white-space: nowrap; letter-spacing: -.34px; }
.dx { width: 9px; height: 9px; margin: 0 14px 0 20px; color: #555; }

.task { height: 40px; flex: none; display: flex; border-top: 1px solid #24405a; box-shadow: inset 0 1px #9db8cd; background: linear-gradient(90deg, #3f7cab 0, #2e73ad 50px, #1b6ba8 120px, #58728a 140px, #5f7790 175px, #a9cbed 192px, #b8d8f6 420px, #60768c 445px, #55697e 700px, #5d738a 900px, #4e6379 1000px, #5f7590 1200px, #5d738e 1630px, #3c4b5c 1700px, #414f5e 1920px); }
.cell { display: flex; align-items: center; justify-content: center; }
.orb { width: 54px; } .ie { width: 72px; } .calc { width: 59px; padding-right: 6px; }
.grip { width: 10px; margin: 4px 1px 4px 3px; background: radial-gradient(circle, #122c45 1px, transparent 1.200px) 0 0/4px 4px; }
.btn { width: 59px; height: 38px; margin: 1px 3px 0 0; border: 1px solid #a9bccd; border-radius: 3px; box-shadow: 0 0 0 1px #2b3b4a; background: linear-gradient(135deg, #a7b4c1 0, #66788b 45%, #5c6f83); display: flex; align-items: center; justify-content: center; flex: none; }
.task .lt { background: linear-gradient(135deg, #e3effa, #a7cdf2); border-color: #eef6fd; box-shadow: 0 0 0 1px #587591; }
.task .chrome { width: 51px; margin-right: 1px; }
.fade { background: linear-gradient(90deg, #e5effa, #a9cbed 55%, #66798b 85%); margin-left: 1px; }
.stk { width: 6px; height: 38px; margin: 1px 3px 0 0; border: 1px solid #a9bccd; border-left-color: #3c5064; border-radius: 0 3px 3px 0; flex: none; }
.task .exp, .task .rarb { width: 53px; margin-right: 1px; }
.task .ff { margin-left: -1px; }
.act { background: linear-gradient(135deg, #e9edf1, #a9b5c1 60%, #c0cad4); }
.g2 { margin-left: auto; }
.en { color: #fff; font-size: 12px; line-height: 34px; width: 26px; margin-left: 9px; }
.tray { width: 90px; height: 24px; margin: 8px 0 0 7px; }
.clock { width: 62px; margin-left: 6px; color: #fff; font-size: 12px; line-height: 17px; text-align: center; padding-top: 3px; letter-spacing: -.4px; }
.peek { width: 14px; margin-left: 5px; border: 1px solid #7d8fa0; background: linear-gradient(135deg, #7b8c9c, #33404e); }

/* image viewer window */
.win { position: absolute; left: 652px; top: 57px; width: 1104px; height: 834px; border: 1px solid #1a2026; border-radius: 6px; padding: 0 6px 6px; box-shadow: inset 0 0 0 1px #d4e4f0, 0 2px 16px 3px rgba(0,0,0,.75); background: linear-gradient(90deg, #a2adb9 0, #9ba7b3 190px, #3a4755 225px, #303f4e 330px, #1f2b39 400px, #1f2b39 850px, #6a7682 960px, #98a3ad 1102px) 0 0/100% 28px no-repeat, linear-gradient(#34414e 0, #9db0c4 30px, #dce9f8 60px, #e8f1fb 224px, #b8d4f3 227px, #b3cfee 600px, #b6d6ef 790px, #2c3a48 802px); }
.title { height: 26px; display: flex; align-items: center; font-size: 12px; color: #10151b; }
.title > span { margin-left: 6px; letter-spacing: -.2px; text-shadow: 0 0 5px #fff; padding-bottom: 1px; }
.ctl { display: flex; margin-left: auto; height: 18px; align-self: flex-start; border: 1px solid #cbd5de; border-top: 0; border-radius: 0 0 5px 5px; box-shadow: 0 0 0 1px #2c3742; overflow: hidden; }
.ctl i { width: 28px; border-right: 1px solid #d0d8df; background: linear-gradient(#a6b0ba 45%, #66727e 50%, #8a95a0); display: flex; align-items: center; justify-content: center; }
.ctl .cl { width: 46px; border: 0; background: linear-gradient(#d8948a 45%, #b3291b 50%, #d5553c); }
.client { width: 1090px; height: 801px; border: 1px solid #27313b; display: flex; flex-direction: column; background: #fff; overflow: hidden; }
.menu { height: 22px; flex: none; background: linear-gradient(#fff, #e4e4e4); display: flex; padding-left: 9px; font: 11px/23px "DejaVu Sans Condensed", "DejaVu Sans", sans-serif; font-stretch: condensed; color: #111; }
.menu span { letter-spacing: -.1px; }
.menu span:nth-child(1) { width: 34px; } .menu span:nth-child(2) { width: 41px; } .menu span:nth-child(3) { width: 43px; }
.tb { height: 32px; flex: none; display: flex; justify-content: space-between; background: linear-gradient(#fff 10%, #e6e6e6); border-bottom: 1px solid #dadada; }
.modes { display: flex; width: 220px; font: 11px/30px "DejaVu Sans Condensed", "DejaVu Sans", sans-serif; font-stretch: condensed; color: #111; margin-top: 1px; letter-spacing: 0; }
.modes b { width: 75px; height: 28px; line-height: 28px; text-align: center; font-weight: 400; color: #fff; background: linear-gradient(#bcdcf7, #a3c8ea); border: 1px solid #6c89a5; margin-right: 11px; }
.modes span:nth-child(2) { width: 61px; } .modes span:nth-child(3) { width: 43px; }
.canvas { height: 723px; flex: none; background: #fff; }
.logos { display: block; }
.cols { display: flex; padding: 85px 0 0 16px; }
.left { width: 570px; margin-right: 29px; display: flex; flex-direction: column; }
.left h2, .right h2 { margin-left: -1px; }
.right h2 { letter-spacing: .2px; }
.form2 { margin-top: 29px; display: grid; grid-template-rows: 45px 45px 175px; gap: 5px; }
.form2 .fld { border-radius: 20px; padding-left: 21px; }
.send { align-self: flex-end; margin-top: 40px; width: 135px; height: 45px; border-radius: 23px; background: #f62537; color: #fff; font: 400 13px/45px Roboto, sans-serif; letter-spacing: .6px; display: flex; align-items: center; justify-content: center; gap: 10px; padding-left: 5px; }
.map { display: block; margin: 31px 0 0 1px; }
.status { height: 22px; flex: none; background: #f0f0f0; display: flex; align-items: center; padding: 1px 0 0 5px; font: 11px/16px "DejaVu Sans Condensed", "DejaVu Sans", sans-serif; font-stretch: condensed; color: #111; }
.status span { border-right: 1px solid #999; margin-right: 7px; white-space: nowrap; letter-spacing: -.25px; flex: none; }
.s1 { width: 29px; } .s2 { width: 71px; } .s3 { width: 62px; } .s4 { width: 107px; } .s5 { width: 202px; } .s6 { width: 34px; }
.status .s5 { letter-spacing: .05px; }
.status svg { margin-left: auto; align-self: flex-end; }

.cursor { position: absolute; left: 1173px; top: 433px; }
.note { position: absolute; left: 113px; top: 290px; width: 161px; height: 30px; border: 1px solid #777; background: #ffffcf; box-shadow: 2px 2px 1px #777; font: 14px/28px "Liberation Sans", sans-serif; color: #111; text-align: center; letter-spacing: .3px; padding-right: 2px; }
.arrows { position: absolute; left: 100px; top: 280px; }
```
